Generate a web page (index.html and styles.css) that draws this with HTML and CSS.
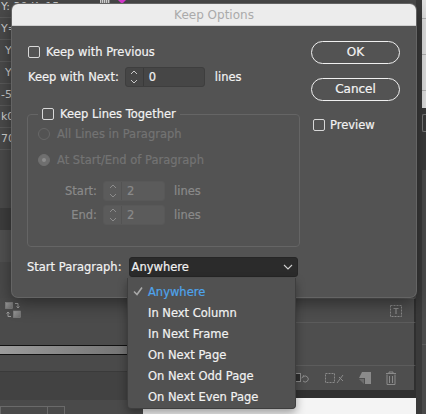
FILE: index.html
```html
<!DOCTYPE html>
<html>
<head>
<meta charset="utf-8">
<title>Keep Options</title>
<link rel="stylesheet" href="styles.css">
</head>
<body>
<div class="app">
  <div class="col-left">
    <ul class="list">
      <li>Y: 30 K: 15</li>
      <li>Y=</li>
      <li class="ind">Y</li>
      <li class="ind">Y</li>
      <li>-5</li>
      <li>k0</li>
      <li>70</li>
    </ul>
    <div class="band b1"></div>
    <div class="band b2"></div>
    <div class="band b3"></div>
    <div class="band b4"></div>
    <div class="band b5">
      <svg class="swap" width="16" height="16" viewBox="0 0 16 16">
        <defs><linearGradient id="g1" x1="0" y1="0" x2="1" y2="1"><stop offset="0" stop-color="#9a9a9a"/><stop offset="1" stop-color="#6a6a6a"/></linearGradient></defs>
        <rect x="0.5" y="0.5" width="7" height="6" fill="url(#g1)" stroke="#888" stroke-width="0.6"/>
        <rect x="8.5" y="9" width="7" height="6.5" fill="url(#g1)" stroke="#888" stroke-width="0.6"/>
        <path d="M10 1.5h3v4M11.5 4.5l1.5 1.5 1.5-1.5" fill="none" stroke="#9a9a9a" stroke-width="1"/>
        <path d="M6 14.5h-3v-4M1.5 11.5l1.5-1.5 1.5 1.5" fill="none" stroke="#9a9a9a" stroke-width="1"/>
      </svg>
    </div>
    <div class="bar"></div>
    <div class="band b6"></div>
    <div class="band b7"></div>
    <div class="band b8"></div>
    <div class="tabs"><span class="tab t1"></span><span class="tab t2"></span></div>
  </div>

  <div class="col-mid">
    <div class="mid-top">
      <span class="swatch"></span><span class="tri"></span>
    </div>
    <div class="prow p1">
      <svg width="12" height="12" viewBox="0 0 12 12"><rect x="0.5" y="0.5" width="11" height="11" fill="none" stroke="#8a8a8a" stroke-dasharray="2 1"/><path d="M3.5 3.5h5M6 3.5v5.5" stroke="#8a8a8a" stroke-width="1.2" fill="none"/></svg>
    </div>
    <div class="prow p2"></div>
    <div class="prow p3">
      <svg width="16" height="12" viewBox="0 0 16 12"><rect x="0.5" y="1.5" width="7" height="8" fill="#2e2e2e" stroke="#8a8a8a"/><path d="M10 5a3 3 0 1 1 0 4M10 5l-1.5 1M10 5l0.5 -1.8" fill="none" stroke="#8a8a8a"/></svg>
      <svg width="20" height="12" viewBox="0 0 20 12"><rect x="0.5" y="1.5" width="9" height="9" fill="none" stroke="#8a8a8a" stroke-dasharray="2 1"/><path d="M12 11l6 -8M14 5l4 4" stroke="#8a8a8a" fill="none"/></svg>
      <svg width="12" height="12" viewBox="0 0 12 12"><path d="M3 0h9v12h-6v-6h-6z" fill="#8a8a8a"/><path d="M0 7h5v5z" fill="#6c6c6c"/></svg>
      <svg width="12" height="14" viewBox="0 0 12 14"><path d="M1 2.5h10M4 2.5v-1.5h4v1.5M2 3.5v10h8v-10M4.5 5v7M7.5 5v7" fill="none" stroke="#8a8a8a"/></svg>
    </div>
    <div class="pdark"></div>
    <div class="pwhite"></div>
  </div>

  <div class="col-right">
    <div class="rlight"><i></i><i></i><i></i></div>
    <div class="rbox"></div>
    <div class="rdark"></div>
    <div class="rpanel"></div>
    <div class="rbottom"></div>
  </div>
</div>

<div class="dialog">
  <div class="titlebar">Keep Options</div>
  <div class="dbody">
    <div class="dleft">
      <div class="row r1"><span class="cb"></span><span>Keep with Previous</span></div>
      <div class="row r2">
        <span>Keep with Next:</span>
        <div class="spin">
          <span class="step"><svg width="10" height="16" viewBox="0 0 10 16"><path d="M2 5l3-3 3 3M2 11l3 3 3-3" fill="none" stroke="#c8c8c8" stroke-width="1"/></svg></span>
          <span class="val">0</span>
        </div>
        <span class="lines">lines</span>
      </div>
      <fieldset class="group">
        <legend><span class="cb"></span><span>Keep Lines Together</span></legend>
        <div class="row dis"><span class="radio"></span><span>All Lines in Paragraph</span></div>
        <div class="row dis r-sel"><span class="radio on"></span><span>At Start/End of Paragraph</span></div>
        <div class="row num n1">
          <span class="lbl">Start:</span>
          <div class="spin off">
            <span class="step"><svg width="10" height="16" viewBox="0 0 10 16"><path d="M2 5l3-3 3 3M2 11l3 3 3-3" fill="none" stroke="#8c8c8c" stroke-width="1"/></svg></span>
            <span class="val">2</span>
          </div>
          <span class="lines">lines</span>
        </div>
        <div class="row num n2">
          <span class="lbl">End:</span>
          <div class="spin off">
            <span class="step"><svg width="10" height="16" viewBox="0 0 10 16"><path d="M2 5l3-3 3 3M2 11l3 3 3-3" fill="none" stroke="#8c8c8c" stroke-width="1"/></svg></span>
            <span class="val">2</span>
          </div>
          <span class="lines">lines</span>
        </div>
      </fieldset>
      <div class="row sp">
        <span>Start Paragraph:</span>
        <div class="select">
          <span>Anywhere</span>
          <svg width="10" height="6" viewBox="0 0 10 6"><path d="M1 1l4 4 4-4" fill="none" stroke="#cfcfcf" stroke-width="1.1"/></svg>
        </div>
      </div>
    </div>
    <div class="dright">
      <div class="btn">OK</div>
      <div class="btn cancel">Cancel</div>
      <div class="row prev"><span class="cb"></span><span>Preview</span></div>
    </div>
  </div>
</div>

<div class="menu">
  <div class="item sel"><span class="chk"><svg width="10" height="9" viewBox="0 0 10 9"><path d="M1 4.5l3 3 5-7" fill="none" stroke="#a8a8a8" stroke-width="1.6"/></svg></span><span>Anywhere</span></div>
  <div class="item"><span class="chk"></span><span>In Next Column</span></div>
  <div class="item"><span class="chk"></span><span>In Next Frame</span></div>
  <div class="item"><span class="chk"></span><span>On Next Page</span></div>
  <div class="item"><span class="chk"></span><span>On Next Odd Page</span></div>
  <div class="item"><span class="chk"></span><span>On Next Even Page</span></div>
</div>
</body>
</html>
```

FILE: styles.css
```css
* { box-sizing: border-box; }
html, body { margin: 0; padding: 0; }
body {
  width: 426px;
  height: 414px;
  overflow: hidden;
  position: relative;
  background: #474747;
  font-family: "DejaVu Sans", "Liberation Sans", sans-serif;
}

/* ---------- background application ---------- */
.app {
  display: grid;
  grid-template-columns: 143px 273px 10px;
  height: 414px;
}
.col-left { display: flex; flex-direction: column; background: #4a4a4a; }
.list { margin: -4px 0 0; padding: 0; list-style: none; }
.list li {
  height: 22px;
  line-height: 21px;
  border-bottom: 1px solid #595959;
  font-size: 11px;
  color: #cfcfcf;
  padding-left: 1px;
  white-space: nowrap;
}
.list li.ind { padding-left: 5px; }
.band { flex: none; }
.b1 { height: 58px; background: #4a4a4a; }
.b2 { height: 22px; background: #3d3d3d; }
.b3 { height: 32px; background: #515151; }
.b4 { height: 36px; background: #4a4a4a; }
.b5 { height: 47px; background: #4b4b4b; padding: 4px 0 0 5px; }
.swap { display: block; }
.bar {
  height: 10px;
  border-top: 1px solid #111;
  border-bottom: 1px solid #111;
  background: linear-gradient(90deg, #9c9c9c, #858585 50%, #6e6e6e);
}
.b6 { height: 17px; background: #4a4a4a; border-bottom: 1px solid #3a3a3a; }
.b7 { height: 28px; background: #424242; }
.b8 { height: 4px; background: #4a4a4a; }
.tabs { flex: 1; display: flex; background: #4a4a4a; }
.tab { height: 12px; margin-top: 2px; border: 1px solid #6a6a6a; border-bottom: none; }
.t1 { width: 48px; }
.t2 { width: 17px; border-left: none; }

.col-mid { display: flex; flex-direction: column; background: #4a4a4a; }
.mid-top { height: 298px; background: #4a4a4a; position: relative; }
.swatch {
  position: absolute; left: -43px; top: 0; width: 10px; height: 3px;
  background: repeating-linear-gradient(90deg, #ddd 0 1px, #888 1px 2px);
}
.tri {
  position: absolute; left: -25px; top: 0;
  border-left: 4px solid transparent; border-right: 4px solid transparent;
  border-top: 4px solid #e23ad8;
}
.prow { background: #4e4e4e; border-top: 1px solid #5c5c5c; border-right: 2px solid #2f2f2f; }
.p1 { height: 24px; display: flex; justify-content: flex-end; align-items: center; padding-right: 12px; }
.p2 { height: 43px; }
.p3 { height: 25px; display: flex; align-items: center; padding-left: 150px; gap: 14px; }
.p3 svg:nth-child(2) { margin-left: 2px; }
.pdark { height: 8px; background: #303030; }
.pwhite { flex: 1; background: #f4f4f4; }

.col-right { display: flex; flex-direction: column; background: #3a3a3a; }
.rlight { height: 108px; margin-left: 6px; background: #e2e2e2; display: flex; flex-direction: column; justify-content: space-around; }
.rlight i { display: block; height: 1px; background: #b5b5b5; }
.rbox { height: 18px; margin: 6px 0 0 6px; border: 1px solid #7a7a7a; border-right: none; border-radius: 2px 0 0 2px; }
.rdark { height: 38px; background: #3a3a3a; }
.rpanel { height: 175px; margin-left: 6px; background: #4b4b4b; border-bottom: 1px solid #5a5a5a; }
.rbottom { flex: 1; margin-left: 6px; background: #4a4a4a; }

/* ---------- dialog ---------- */
.dialog {
  position: absolute;
  left: 12px;
  top: 4px;
  width: 404px;
  height: 293px;
  background: #535353;
  border-radius: 6px;
  box-shadow: 0 0 0 1px #646464, 0 6px 18px rgba(0, 0, 0, 0.45);
  overflow: hidden;
  display: flex;
  flex-direction: column;
  color: #f2f2f2;
  font-size: 11.5px;
  -webkit-text-stroke: 0.2px currentColor;
}
.titlebar {
  height: 22px;
  background: #ececec;
  color: #aaaaaa;
  font-size: 12px;
  line-height: 22px;
  text-align: center;
  border-bottom: 1px solid #cfcfcf;
  -webkit-text-stroke: 0;
}
.dbody { flex: 1; display: flex; gap: 11px; padding: 15px 16px 0 15px; }
.dleft { width: 273px; display: flex; flex-direction: column; }
.dright { width: 89px; display: flex; flex-direction: column; }

.row { display: flex; align-items: center; height: 20px; white-space: nowrap; }
.r1 { padding-left: 1px; gap: 6px; margin-top: 1px; }
.r2 { margin-top: 5px; padding-left: 1px; }
.r2 .spin { margin-left: 6px; }
.r2 .lines { margin-left: 10px; }

.cb {
  width: 12px; height: 12px;
  border: 1px solid #d8d8d8;
  border-radius: 2px;
  flex: none;
}

.spin {
  display: flex;
  width: 80px;
  height: 20px;
  background: #464646;
  border: 1px solid #3e3e3e;
  border-radius: 3px;
}
.spin .step {
  width: 18px;
  border-right: 1px solid #3a3a3a;
  display: flex;
  align-items: center;
  justify-content: center;
}
.spin .step svg { display: block; }
.spin .val { padding-left: 5px; line-height: 18px; }
.spin.off { width: 62px; background: #5b5b5b; border-color: #585858; }
.spin.off .step { border-right-color: #535353; }
.spin.off .val { color: #8a8a8a; }

.group {
  margin: 20px 0 0;
  width: 273px;
  border: 1px solid #656565;
  border-radius: 4px;
  padding: 3px 10px 21px 10px;
}
.group legend {
  padding: 0 4px;
  height: 14px;
  line-height: 14px;
  display: flex;
  align-items: center;
  gap: 6px;
  white-space: nowrap;
}
.dis { color: #737373; gap: 7px; }
.r-sel { margin-top: 6px; }
.radio {
  width: 12px; height: 12px;
  border-radius: 50%;
  border: 1px solid #676767;
  flex: none;
  display: flex; align-items: center; justify-content: center;
}
.radio.on { background: #6f6f6f; border-color: #6f6f6f; }
.radio.on::after { content: ""; width: 4px; height: 4px; border-radius: 50%; background: #8d8d8d; }

.num { color: #8a8a8a; }
.num .lbl { width: 59px; text-align: right; margin-right: 6px; }
.num .lines { margin-left: 9px; }
.n1 { margin-top: 11px; }
.n2 { margin-top: 4px; }

.sp { margin-top: 10px; }
.select {
  margin-left: 7px;
  width: 169px;
  height: 20px;
  background: #2b2b2b;
  border: 1px solid #262626;
  border-radius: 3px;
  display: flex;
  align-items: center;
  justify-content: space-between;
  padding: 0 4px 0 2px;
  color: #f2f2f2;
}
.select svg { display: block; }

.btn {
  height: 23px;
  border: 1.5px solid #f0f0f0;
  border-radius: 12px;
  text-align: center;
  line-height: 20px;
  font-size: 12px;
  color: #f4f4f4;
}
.cancel { margin-top: 14px; }
.prev { margin-top: 14px; padding-left: 2px; gap: 5px; }

/* ---------- dropdown menu ---------- */
.menu {
  position: absolute;
  left: 127px;
  top: 278px;
  width: 169px;
  background: #515151;
  border: 1px solid #3e3e3e;
  border-top: none;
  border-radius: 0 0 4px 4px;
  box-shadow: 0 4px 10px rgba(0, 0, 0, 0.35);
  padding: 3px 0 1px;
  font-size: 11.5px;
  color: #f2f2f2;
  -webkit-text-stroke: 0.2px currentColor;
}
.item { display: flex; align-items: center; height: 21px; white-space: nowrap; }
.item .chk { width: 20px; display: flex; justify-content: center; }
.item.sel { color: #4ea4ec; }
```
